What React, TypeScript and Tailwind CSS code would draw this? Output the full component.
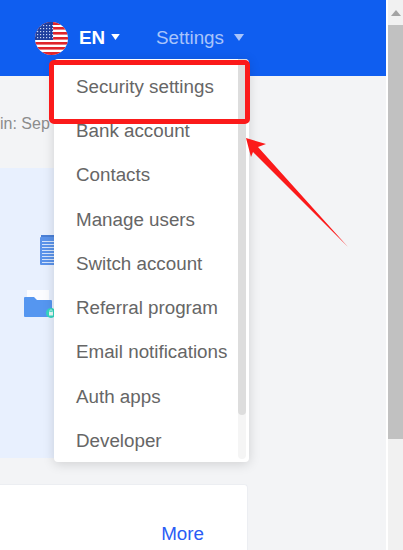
const menuItems = [
  "Security settings",
  "Bank account",
  "Contacts",
  "Manage users",
  "Switch account",
  "Referral program",
  "Email notifications",
  "Auth apps",
  "Developer",
];

const watermarks = [
  { text: "2024/09/19 17:03-zhoufr", className: "left-[14px] top-[101px]" },
  { text: "2024/09/19 17:03-zhoufr", className: "left-[68px] top-[244px]" },
  { text: "2024/09/19 17:03-zhoufr", className: "left-[121px] top-[386px]" },
  { text: "2024/09/19 17:03-zhoufr", className: "left-[176px] top-[531px]" },
];

function Caret({ className }: { className: string }) {
  return (
    <svg viewBox="0 0 10 7" className={className} fill="currentColor">
      <path d="M0 0h10L5 7z" />
    </svg>
  );
}

function Flag() {
  return (
    <svg viewBox="0 0 33 33" className="w-[33px] h-[33px]">
      <defs>
        <clipPath id="flag-circle">
          <circle cx="16.5" cy="16.5" r="16.5" />
        </clipPath>
      </defs>
      <g clipPath="url(#flag-circle)">
        <rect width="33" height="33" fill="#fff" />
        <rect y="0" width="33" height="3" fill="#e0252b" />
        <rect y="5" width="33" height="2.6" fill="#e0252b" />
        <rect y="10" width="33" height="2.6" fill="#e0252b" />
        <rect y="15" width="33" height="2.6" fill="#e0252b" />
        <rect y="20" width="33" height="2.6" fill="#e0252b" />
        <rect y="25" width="33" height="2.6" fill="#e0252b" />
        <rect y="30" width="33" height="3" fill="#e0252b" />
        <rect width="18" height="18" fill="#1f3f9e" />
        {[3, 6, 9, 12, 15].map((y) =>
          [2, 5, 8, 11, 14, 17].map((x) => (
            <rect key={`${x}-${y}`} x={x} y={y} width="1.2" height="1.2" fill="#c9d6f5" />
          )),
        )}
      </g>
    </svg>
  );
}

function DocIcon() {
  return (
    <svg viewBox="0 0 16 30" className="w-[16px] h-[30px]">
      <rect x="1" y="0" width="15" height="2" fill="#4a7fd6" />
      <rect x="0" y="2" width="16" height="28" rx="1" fill="#5b93ea" />
      {[6, 9, 12, 15, 18, 21, 24, 27].map((y) => (
        <rect key={y} x="2" y={y} width="14" height="1" fill="#d5e4fb" />
      ))}
    </svg>
  );
}

function FolderIcon() {
  return (
    <svg viewBox="0 0 32 28" className="w-[32px] h-[28px]">
      <rect x="3" y="0" width="22" height="10" fill="#fbfcff" />
      <path d="M0 8a1 1 0 0 1 1-1h9l3 3h14a1 1 0 0 1 1 1v15a1 1 0 0 1-1 1H1a1 1 0 0 1-1-1z" fill="#5596f0" />
      <circle cx="27" cy="23" r="5" fill="#35d6c0" />
      <rect x="25" y="22" width="4" height="3.5" fill="#e9fbf8" />
      <path d="M25.8 22v-1a1.2 1.2 0 0 1 2.4 0v1" fill="none" stroke="#e9fbf8" strokeWidth="0.7" />
    </svg>
  );
}

export default function App() {
  return (
    <div className="relative flex w-[403px] h-[550px] overflow-hidden bg-white font-['Liberation_Sans',Arial,sans-serif]">
      <div className="w-[386px] h-full bg-[#f3f4f6] flex flex-col shrink-0">
        <header className="h-[76px] bg-[#0f5ef0] flex items-center pl-[35px] shrink-0">
          <Flag />
          <span className="ml-[11px] text-[18.8px] font-bold text-white">EN</span>
          <Caret className="ml-[6px] mb-[3px] w-[9px] h-[6px] text-white" />
          <span className="ml-[36px] text-[18.8px] text-[#a9c4fb]">Settings</span>
          <Caret className="ml-[10px] mb-[1px] w-[10px] h-[7px] text-[#a9c4fb]" />
        </header>
        <div className="h-[92px] shrink-0 flex items-center pt-[4px] text-[16px] text-[#8c8c8c] whitespace-nowrap">
          in: Sep
        </div>
        <div className="w-[248px] h-[290px] shrink-0 bg-[#e8f0fe] relative flex flex-col">
          <div className="pl-[40px] pt-[67px]">
            <DocIcon />
          </div>
          <div className="pl-[24px] pt-[25px]">
            <FolderIcon />
          </div>
        </div>
        <div className="mt-[26px] w-[248px] flex-1 bg-white rounded-tr-[4px] border-t border-r border-[#eceef2] flex justify-end pt-[37px] pr-[43px]">
          <span className="text-[18.8px] leading-[24px] text-[#2a5cf5]">More</span>
        </div>
      </div>

      {/* page scrollbar */}
      <div className="ml-[2px] w-[15px] h-full bg-[#f1f1f1] flex flex-col">
        <div className="h-[25px] flex items-center justify-center">
          <svg viewBox="0 0 10 6" className="w-[10px] h-[6px]" fill="#a3a3a3">
            <path d="M5 0l5 6H0z" />
          </svg>
        </div>
        <div className="h-[414px] bg-[#c1c1c1]" />
      </div>

      {/* settings dropdown */}
      <div className="absolute left-[54px] top-[59px] w-[195px] h-[403px] bg-white rounded-[4px] shadow-[0_2px_12px_rgba(0,0,0,0.15)] flex">
        <ul className="flex-1 pl-[22px] pt-[5.6px]">
          {menuItems.map((item) => (
            <li key={item} className="h-[44.3px] flex items-center text-[18.8px] text-[#666666] whitespace-nowrap">
              {item}
            </li>
          ))}
        </ul>
        <div className="w-[8px] mr-[3px] mb-[3px] bg-[#f5f5f5] rounded-[4px]">
          <div className="h-[356px] bg-[#dddddd] rounded-b-[4px]" />
        </div>
      </div>

      {/* faint watermark */}
      {watermarks.map((mark) => (
        <span
          key={mark.className}
          className={`absolute ${mark.className} -rotate-[25deg] text-[24px] text-black/[0.025] whitespace-nowrap pointer-events-none`}
        >
          {mark.text}
        </span>
      ))}

      {/* annotation */}
      <div className="absolute left-[49px] top-[60px] w-[201px] h-[64px] border-[5px] border-[#fb1a1a] rounded-[5px]" />
      <svg className="absolute left-0 top-0 w-[403px] h-[550px] pointer-events-none" viewBox="0 0 403 550">
        <path d="M246 138L266 144L258 147L348 247L253 152L251 157Z" fill="#fb1a1a" />
      </svg>
    </div>
  );
}
